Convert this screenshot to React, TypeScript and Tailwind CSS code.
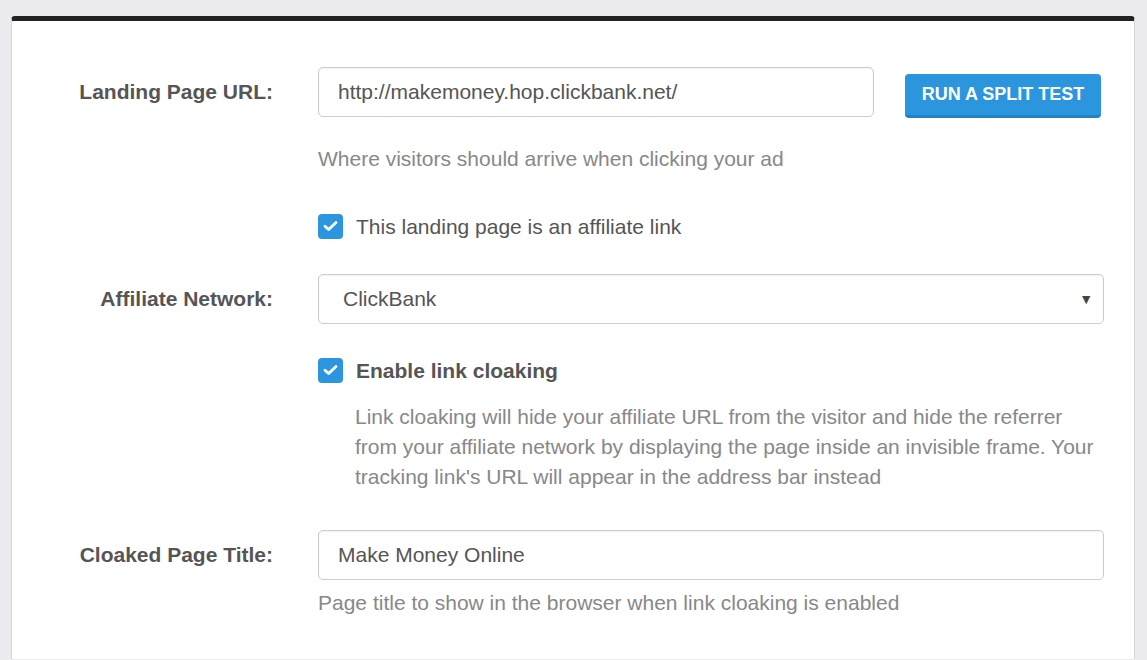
import React from "react";

function Check() {
  return (
    <span className="flex h-[25px] w-[25px] shrink-0 items-center justify-center rounded-[4px] bg-[#2b95de]">
      <svg width="15" height="12" viewBox="0 0 15 12" fill="none">
        <path d="M2 6.2l3.6 3.4L13 2.4" stroke="#fff" strokeWidth="2.8" strokeLinecap="round" strokeLinejoin="round" />
      </svg>
    </span>
  );
}

function Label({ children }: { children: React.ReactNode }) {
  return (
    <div className="flex h-[50px] w-[261px] shrink-0 items-center justify-end text-[21px] font-bold text-[#555]">
      {children}
    </div>
  );
}

const inputCls =
  "flex h-[50px] items-center rounded-[5px] border border-[#ccc] bg-white px-[19px] text-[21px] text-[#555] shadow-[inset_0_1px_2px_rgba(0,0,0,0.06)]";

export default function App() {
  return (
    <div
      className="min-h-[660px] bg-[#ececf0] px-[11px] pt-[16px]"
      style={{ fontFamily: '"Liberation Sans", Arial, sans-serif' }}
    >
      <div className="h-[643px] w-[1124px] overflow-hidden rounded-t-[4px] border-t-[5px] border-x border-t-[#222] border-x-[#d4d4d8] bg-white">
        <div className="pt-[46px] pr-[30px]">
          {/* Landing Page URL */}
          <div className="flex">
            <Label>Landing Page URL:</Label>
            <div className="ml-[45px] flex-1">
              <div className="flex items-start">
                <div className={inputCls + " w-[556px]"}>http://makemoney.hop.clickbank.net/</div>
                <button className="ml-[31px] mt-[7px] h-[44px] w-[196px] rounded-[4px] border-b-[3px] border-b-[#1f82c6] bg-[#2b95de] text-[18px] font-bold text-white">
                  RUN A SPLIT TEST
                </button>
              </div>
              <p className="mt-[26px] text-[21px] leading-[30px] text-[#888]">
                Where visitors should arrive when clicking your ad
              </p>
              <div className="mt-[37px] flex h-[30px] items-center gap-[13px] text-[21px] leading-[30px] text-[#555]">
                <Check />
                <span className="mt-[2px]">This landing page is an affiliate link</span>
              </div>
            </div>
          </div>

          {/* Affiliate Network */}
          <div className="mt-[33px] flex">
            <Label>Affiliate Network:</Label>
            <div className="ml-[45px] flex-1">
              <div className={inputCls + " justify-between pl-[24px] pr-[10px]"}>
                <span>ClickBank</span>
                <span className="text-[14px] text-[#444]">▼</span>
              </div>
              <div className="mt-[31px] flex h-[30px] items-center gap-[13px] text-[21px] font-bold leading-[30px] text-[#555]">
                <Check />
                <span className="mt-[2px]">Enable link cloaking</span>
              </div>
              <p className="mt-[17px] pl-[37px] text-[21px] leading-[30px] text-[#888]">
                Link cloaking will hide your affiliate URL from the visitor and hide the referrer from your affiliate
                network by displaying the page inside an invisible frame. Your tracking link's URL will appear in the
                address bar instead
              </p>
            </div>
          </div>

          {/* Cloaked Page Title */}
          <div className="mt-[38px] flex">
            <Label>Cloaked Page Title:</Label>
            <div className="ml-[45px] flex-1">
              <div className={inputCls}>Make Money Online</div>
              <p className="mt-[8px] text-[21px] leading-[30px] text-[#888]">
                Page title to show in the browser when link cloaking is enabled
              </p>
            </div>
          </div>
        </div>
      </div>
    </div>
  );
}
